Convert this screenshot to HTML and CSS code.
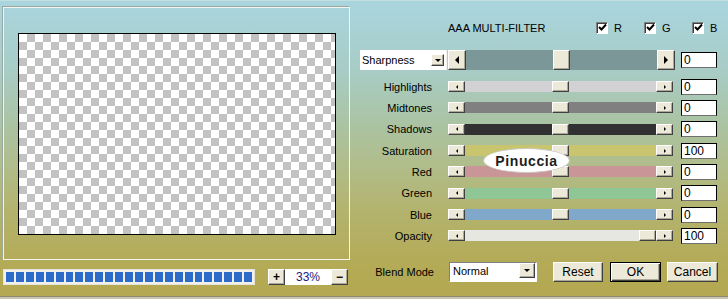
FILE: index.html
```html
<!DOCTYPE html>
<html>
<head>
    <title>AAA Multi-Filter</title>
    <link rel="stylesheet" href="styles.css">
</head>
<body>
    <div class="window">
        <div class="left">
            <div class="preview-frame">
                <div class="preview"></div>
            </div>
            <div class="left-bottom">
                <div class="progress">
                    <span></span><span></span><span></span><span></span><span></span>
                    <span></span><span></span><span></span><span></span><span></span>
                    <span></span><span></span><span></span><span></span><span></span>
                    <span></span><span></span><span></span><span></span><span></span>
                    <span></span><span></span><span></span><span></span><span></span>
                </div>
                <div class="zoom">
                    <span class="raised zbtn">+</span>
                    <span class="zoom-value">33%</span>
                    <span class="raised zbtn">&minus;</span>
                </div>
            </div>
        </div>

        <div class="right">
            <div class="header">
                <span class="title">AAA MULTI-FILTER</span>
                <span class="chk"><span class="box"><svg width="9" height="9" viewBox="0 0 9 9"><polyline points="1,4 3.5,6.5 8,1.5" fill="none" stroke="#000" stroke-width="2"/></svg></span>R</span>
                <span class="chk"><span class="box"><svg width="9" height="9" viewBox="0 0 9 9"><polyline points="1,4 3.5,6.5 8,1.5" fill="none" stroke="#000" stroke-width="2"/></svg></span>G</span>
                <span class="chk"><span class="box"><svg width="9" height="9" viewBox="0 0 9 9"><polyline points="1,4 3.5,6.5 8,1.5" fill="none" stroke="#000" stroke-width="2"/></svg></span>B</span>
            </div>

            <div class="main-row">
                <div class="select sharp">
                    <span class="select-text">Sharpness</span>
                    <span class="raised drop"><i class="down"></i></span>
                </div>
                <div class="slider big">
                    <span class="raised sbtn"><i class="left-arrow"></i></span>
                    <span class="track" style="background:#7b9797;"><span class="raised thumb" style="--pos:0.5"></span></span>
                    <span class="raised sbtn"><i class="right-arrow"></i></span>
                </div>
                <span class="value">0</span>
            </div>

            <div class="controls">
                <span class="label">Highlights</span>
                <div class="slider">
                    <span class="raised sbtn"><i class="left-arrow"></i></span>
                    <span class="track" style="background:#d2d1d4;"><span class="raised thumb" style="--pos:0.5"></span></span>
                    <span class="raised sbtn"><i class="right-arrow"></i></span>
                </div>
                <span class="value">0</span>

                <span class="label">Midtones</span>
                <div class="slider">
                    <span class="raised sbtn"><i class="left-arrow"></i></span>
                    <span class="track" style="background:#808080;"><span class="raised thumb" style="--pos:0.5"></span></span>
                    <span class="raised sbtn"><i class="right-arrow"></i></span>
                </div>
                <span class="value">0</span>

                <span class="label">Shadows</span>
                <div class="slider">
                    <span class="raised sbtn"><i class="left-arrow"></i></span>
                    <span class="track" style="background:#313131;"><span class="raised thumb" style="--pos:0.5"></span></span>
                    <span class="raised sbtn"><i class="right-arrow"></i></span>
                </div>
                <span class="value">0</span>

                <span class="label">Saturation</span>
                <div class="slider">
                    <span class="raised sbtn"><i class="left-arrow"></i></span>
                    <span class="track" style="background:#c9c56e;"><span class="raised thumb" style="--pos:0.5"></span></span>
                    <span class="raised sbtn"><i class="right-arrow"></i></span>
                </div>
                <span class="value">100</span>

                <span class="label">Red</span>
                <div class="slider">
                    <span class="raised sbtn"><i class="left-arrow"></i></span>
                    <span class="track" style="background:#c99597;"><span class="raised thumb" style="--pos:0.5"></span></span>
                    <span class="raised sbtn"><i class="right-arrow"></i></span>
                </div>
                <span class="value">0</span>

                <span class="label">Green</span>
                <div class="slider">
                    <span class="raised sbtn"><i class="left-arrow"></i></span>
                    <span class="track" style="background:#8ec795;"><span class="raised thumb" style="--pos:0.5"></span></span>
                    <span class="raised sbtn"><i class="right-arrow"></i></span>
                </div>
                <span class="value">0</span>

                <span class="label">Blue</span>
                <div class="slider">
                    <span class="raised sbtn"><i class="left-arrow"></i></span>
                    <span class="track" style="background:#80a8ca;"><span class="raised thumb" style="--pos:0.5"></span></span>
                    <span class="raised sbtn"><i class="right-arrow"></i></span>
                </div>
                <span class="value">0</span>

                <span class="label">Opacity</span>
                <div class="slider">
                    <span class="raised sbtn"><i class="left-arrow"></i></span>
                    <span class="track dotted"><span class="raised thumb" style="--pos:1"></span></span>
                    <span class="raised sbtn"><i class="right-arrow"></i></span>
                </div>
                <span class="value">100</span>
            </div>

            <div class="bottom-row">
                <span class="label">Blend Mode</span>
                <div class="select blend">
                    <span class="select-text">Normal</span>
                    <span class="raised drop"><i class="down"></i></span>
                </div>
                <span class="raised button reset">Reset</span>
                <span class="raised button ok">OK</span>
                <span class="raised button cancel">Cancel</span>
            </div>

            <div class="watermark">Pinuccia</div>
        </div>
    </div>
</body>
</html>
```

FILE: styles.css
```css
* {
    box-sizing: border-box;
}

html, body {
    margin: 0;
    padding: 0;
}

body {
    width: 728px;
    height: 299px;
    overflow: hidden;
    font-family: "Liberation Sans", Arial, sans-serif;
    font-size: 11px;
    color: #000000;
    background-color: #c9c5ae;
}

.window {
    height: 297px;
    display: flex;
    gap: 10px;
    border-top: 1px solid #c4dde0;
    border-bottom: 1px solid #8a8872;
    background: linear-gradient(to bottom, #a9d5de 0%, #a8cdc8 22%, #aac4a6 40%, #b0bd8c 55%, #b3b470 70%, #b4ab58 88%, #b4a850 100%);
}

/* left side: preview */
.left {
    width: 350px;
    flex-shrink: 0;
    padding: 6px 0 0 3px;
}

.preview-frame {
    width: 347px;
    height: 253px;
    padding: 25px 0 0 14px;
    border: 1px solid #f2f5ef;
    box-shadow: -1px -1px 0 #9aa8a4;
}

.preview {
    width: 318px;
    height: 202px;
    border: 1px solid #000000;
    background: repeating-conic-gradient(#c2c2c2 0 25%, #ffffff 0 50%) 0 0 / 16px 16px;
}

.left-bottom {
    display: flex;
    align-items: center;
    margin-top: 9px;
}

.progress {
    width: 252px;
    height: 16px;
    padding: 2px;
    display: flex;
    gap: 2px;
    background-color: #f1f1ea;
    border: 1px solid #e4e4dc;
}

.progress span {
    width: 8px;
    height: 10px;
    background-color: #2d6bcb;
}

.zoom {
    display: flex;
    margin-left: 13px;
    height: 16px;
}

.zbtn {
    width: 17px;
    height: 16px;
    display: flex;
    align-items: center;
    justify-content: center;
    font-weight: bold;
    font-size: 12px;
}

.zoom-value {
    width: 46px;
    background-color: #ffffff;
    color: #1b1b7a;
    font-size: 12px;
    text-align: center;
    line-height: 16px;
}

/* shared widgets */
.raised {
    background-color: #ece9d8;
    border: 1px solid;
    border-color: #ffffff #404040 #404040 #ffffff;
    box-shadow: inset -1px -1px 0 #aca899;
}

.value {
    width: 36px;
    height: 16px;
    padding-left: 2px;
    line-height: 14px;
    font-size: 12px;
    background-color: #ffffff;
    border: 1px solid #000000;
    border-bottom-color: #707070;
}

.label {
    text-align: right;
    padding-right: 16px;
}

/* right side */
.right {
    position: relative;
    width: 368px;
    flex-shrink: 0;
    padding-top: 20px;
}

.header {
    display: flex;
    align-items: center;
    height: 13px;
    padding-left: 88px;
}

.title {
    width: 148px;
    flex-shrink: 0;
    font-size: 11px;
}

.chk {
    width: 48px;
    flex-shrink: 0;
    display: flex;
    align-items: center;
    gap: 6px;
}

.chk .box {
    width: 12px;
    height: 12px;
    display: flex;
    align-items: center;
    justify-content: center;
    background-color: #ffffff;
    border: 1px solid;
    border-color: #808080 #ffffff #ffffff #808080;
    box-shadow: inset 1px 1px 0 #404040;
}

.main-row {
    display: flex;
    align-items: center;
    height: 20px;
    margin-top: 16px;
}

.select {
    display: flex;
    align-items: center;
    justify-content: space-between;
    background-color: #ffffff;
}

.select-text {
    padding-left: 2px;
}

.select.sharp {
    width: 87px;
    height: 20px;
    margin-right: 1px;
    padding-right: 2px;
    border-right: 1px solid #f2f2ea;
}

.select.sharp .drop {
    width: 13px;
    height: 12px;
}

.drop {
    display: flex;
    align-items: center;
    justify-content: center;
}

.down {
    border-left: 3px solid transparent;
    border-right: 3px solid transparent;
    border-top: 3px solid #000000;
}

.slider {
    display: flex;
    width: 225px;
    height: 11px;
}

.slider.big {
    width: 227px;
    height: 20px;
    margin-right: 6px;
}

.sbtn {
    width: 17px;
    display: flex;
    align-items: center;
    justify-content: center;
}

.big .sbtn {
    width: 18px;
}

.left-arrow {
    border-top: 2px solid transparent;
    border-bottom: 2px solid transparent;
    border-right: 2px solid #000000;
}

.right-arrow {
    border-top: 2px solid transparent;
    border-bottom: 2px solid transparent;
    border-left: 2px solid #000000;
}

.big .left-arrow {
    border-top-width: 4px;
    border-bottom-width: 4px;
    border-right-width: 4px;
}

.big .right-arrow {
    border-top-width: 4px;
    border-bottom-width: 4px;
    border-left-width: 4px;
}

.track {
    position: relative;
    flex: 1;
}

.track.dotted {
    background-color: #f4f4f0;
    background-image: radial-gradient(#d8d8d0 0.6px, transparent 0.8px);
    background-size: 2px 2px;
}

.thumb {
    position: absolute;
    top: 0;
    bottom: 0;
    width: 17px;
    left: calc((100% - 17px) * var(--pos));
}

.controls {
    display: grid;
    grid-template-columns: 88px 233px 36px;
    grid-template-rows: 21px 21px 22px 21px 21px 22px 21px 21px;
    align-items: center;
    margin-top: 6px;
}

.bottom-row {
    display: flex;
    align-items: center;
    height: 20px;
    margin-top: 16px;
}

.bottom-row .label {
    width: 89px;
    padding-right: 15px;
}

.select.blend {
    width: 88px;
    height: 20px;
    margin-right: 16px;
    padding: 0 1px 2px 2px;
    align-items: flex-start;
    border: 1px solid;
    border-color: #808080 #ffffff #ffffff #808080;
}

.select.blend .select-text {
    line-height: 17px;
    padding-left: 1px;
}

.select.blend .drop {
    width: 16px;
    height: 15px;
}

.button {
    height: 20px;
    display: flex;
    align-items: center;
    justify-content: center;
    font-size: 12px;
}

.reset {
    width: 50px;
    margin-right: 7px;
}

.ok {
    width: 51px;
    margin-right: 6px;
    border: 1px solid #000000;
    box-shadow: inset 1px 1px 0 #ffffff, inset -1px -1px 0 #404040, inset -2px -2px 0 #aca899;
}

.cancel {
    width: 51px;
}

.watermark {
    position: absolute;
    left: 123px;
    top: 147px;
    width: 87px;
    height: 25px;
    border-radius: 50%;
    background-color: #ffffff;
    border: 1px solid #c8c8c0;
    font-weight: bold;
    font-size: 14px;
    letter-spacing: 0.6px;
    color: #1e1e1e;
    display: flex;
    align-items: center;
    justify-content: center;
}
```
